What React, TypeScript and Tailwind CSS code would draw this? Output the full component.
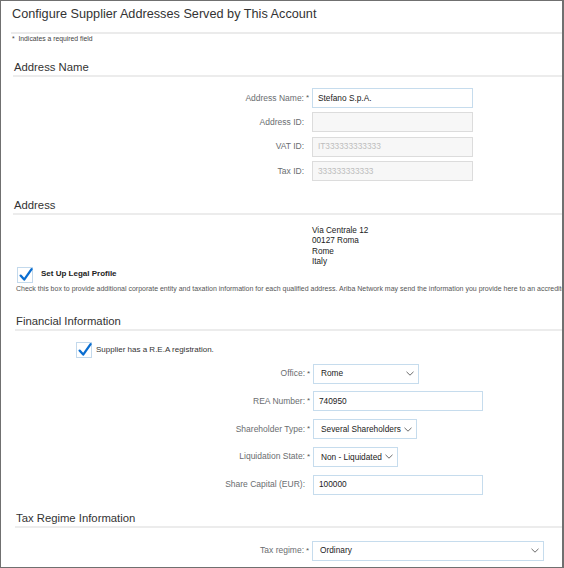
import type { ReactNode } from "react";

const Chevron = () => (
  <svg width="8" height="5" viewBox="0 0 8 5" className="shrink-0">
    <path d="M0.5 0.8 L4 4.2 L7.5 0.8" fill="none" stroke="#6b6b6b" strokeWidth="1" />
  </svg>
);

const Check = () => (
  <span className="relative flex size-[16px] shrink-0 items-center justify-center border border-[#c3d9ec] bg-white">
    <svg width="16" height="16" viewBox="0 0 16 16" className="absolute left-[0px] top-[-1px]">
      <path d="M2.6 8.6 L6.2 12.6 L13.6 2.2" fill="none" stroke="#0a6ed1" strokeWidth="2.3" strokeLinecap="round" strokeLinejoin="round" />
    </svg>
  </span>
);

const SectionHeader = ({ title, className }: { title: string; className: string }) => (
  <div className={`border-b-2 border-[#ececec] pb-[1px] text-[11.3px] leading-[14px] text-[#333] ${className}`}>
    {title}
  </div>
);

const Row = ({ label, required, children }: { label: string; required?: boolean; children: ReactNode }) => (
  <div className="flex h-[20px] items-center">
    <div className="w-[303px] whitespace-nowrap text-right text-[8.5px] text-[#6a6d70]">{label}</div>
    <span className="w-[8px] pl-[2px] text-[8px] text-[#555]">{required ? "*" : ""}</span>
    {children}
  </div>
);

const TextInput = ({ value, width, disabled }: { value: string; width: string; disabled?: boolean }) => (
  <div
    className={`flex h-[20px] items-center px-[5px] text-[8.3px] ${width} ${
      disabled ? "border border-[#dcdcdc] bg-[#f7f7f7] text-[#bdbdbd]" : "border border-[#c6dced] bg-white text-[#222]"
    }`}
  >
    {value}
  </div>
);

const Select = ({ value, width }: { value: string; width?: string }) => (
  <div
    className={`flex h-[20px] items-center justify-between gap-[3px] border border-[#c6dced] bg-white pl-[7px] pr-[4px] text-[8.3px] text-[#222] ${
      width ?? ""
    }`}
  >
    <span className="whitespace-nowrap">{value}</span>
    <Chevron />
  </div>
);

export default function App() {
  return (
    <div className="h-[568px] w-[564px] overflow-hidden border-y border-l border-r-2 border-[#707070] bg-white font-['Liberation_Sans',Arial,sans-serif]">
      <div className="h-[31px] pl-[11px] pt-[6px] text-[12.7px] leading-[15px] text-[#333]">
        Configure Supplier Addresses Served by This Account
      </div>
      <div className="ml-[10px] h-[2px] bg-[#ebebeb]" />
      <div className="pl-[11px] pt-[1px] text-[6.8px] leading-[8px] text-[#444]">*&nbsp;&nbsp;Indicates a required field</div>

      <SectionHeader title="Address Name" className="ml-[12px] mt-[17px] pl-[1px]" />
      <div className="mt-[11px] flex flex-col gap-[4.3px]">
        <Row label="Address Name:" required>
          <TextInput value="Stefano S.p.A." width="w-[161px]" />
        </Row>
        <Row label="Address ID:">
          <TextInput value="" width="w-[161px]" disabled />
        </Row>
        <Row label="VAT ID:">
          <TextInput value="IT333333333333" width="w-[161px]" disabled />
        </Row>
        <Row label="Tax ID:">
          <TextInput value="333333333333" width="w-[161px]" disabled />
        </Row>
      </div>

      <SectionHeader title="Address" className="ml-[12px] mt-[17px] pl-[1px]" />
      <div className="mt-[11px] pl-[311px] text-[8.2px] leading-[10.4px] text-[#222]">
        <div>Via Centrale 12</div>
        <div>00127 Roma</div>
        <div>Rome</div>
        <div>Italy</div>
      </div>
      <div className="-mt-[1px] flex items-center gap-[8px] pl-[16px]">
        <Check />
        <span className="-mt-[2px] text-[8px] font-bold text-[#222]">Set Up Legal Profile</span>
      </div>
      <div className="mt-[1px] whitespace-nowrap pl-[15px] text-[7px] leading-[9px] text-[#555]">
        Check this box to provide additional corporate entity and taxation information for each qualified address. Ariba
        Network may send the information you provide here to an accredited third party for validation.
      </div>

      <SectionHeader title="Financial Information" className="ml-[14px] mt-[21px] pl-[1px]" />
      <div className="mt-[11px] flex items-center gap-[4px] pl-[75px]">
        <Check />
        <span className="text-[8px] text-[#333]">Supplier has a R.E.A registration.</span>
      </div>
      <div className="mt-[6px] flex flex-col gap-[7.75px] pl-[1px]">
        <Row label="Office:" required>
          <Select value="Rome" width="w-[106px]" />
        </Row>
        <Row label="REA Number:" required>
          <TextInput value="740950" width="w-[170px]" />
        </Row>
        <Row label="Shareholder Type:" required>
          <Select value="Several Shareholders" />
        </Row>
        <Row label="Liquidation State:" required>
          <Select value="Non - Liquidated" />
        </Row>
        <Row label="Share Capital (EUR):">
          <TextInput value="100000" width="w-[170px]" />
        </Row>
      </div>

      <SectionHeader title="Tax Regime Information" className="ml-[14px] mt-[16px] pl-[1px]" />
      <div className="mt-[13px]">
        <Row label="Tax regime:" required>
          <Select value="Ordinary" width="w-[232px]" />
        </Row>
      </div>
    </div>
  );
}
